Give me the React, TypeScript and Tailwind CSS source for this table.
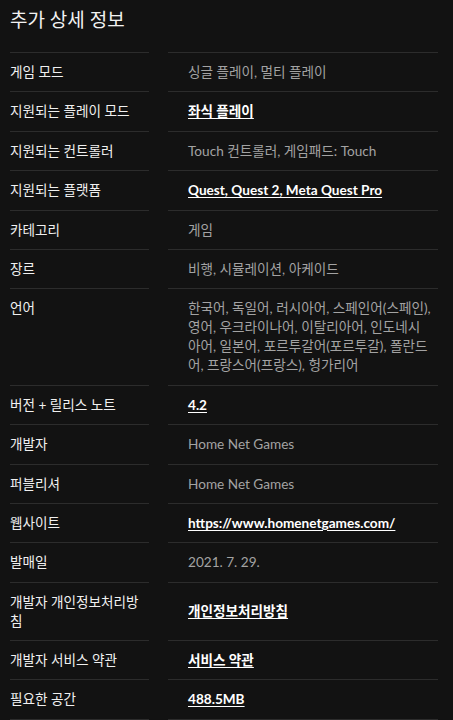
const rows: { label: string; value: string; link?: boolean }[] = [
  { label: "게임 모드", value: "싱글 플레이, 멀티 플레이" },
  { label: "지원되는 플레이 모드", value: "좌식 플레이", link: true },
  { label: "지원되는 컨트롤러", value: "Touch 컨트롤러, 게임패드: Touch" },
  { label: "지원되는 플랫폼", value: "Quest, Quest 2, Meta Quest Pro", link: true },
  { label: "카테고리", value: "게임" },
  { label: "장르", value: "비행, 시뮬레이션, 아케이드" },
  {
    label: "언어",
    value:
      "한국어, 독일어, 러시아어, 스페인어(스페인), 영어, 우크라이나어, 이탈리아어, 인도네시아어, 일본어, 포르투갈어(포르투갈), 폴란드어, 프랑스어(프랑스), 헝가리어",
  },
  { label: "버전 + 릴리스 노트", value: "4.2", link: true },
  { label: "개발자", value: "Home Net Games" },
  { label: "퍼블리셔", value: "Home Net Games" },
  { label: "웹사이트", value: "https://www.homenetgames.com/", link: true },
  { label: "발매일", value: "2021. 7. 29." },
  { label: "개발자 개인정보처리방침", value: "개인정보처리방침", link: true },
  { label: "개발자 서비스 약관", value: "서비스 약관", link: true },
  { label: "필요한 공간", value: "488.5MB", link: true },
];

const App = () => {
  return (
    <div
      className="min-h-screen bg-[#121212] pl-[10px] pb-4"
      style={{ fontFamily: 'Lato, "Noto Sans CJK KR", sans-serif' }}
    >
      <h2 className="pt-[8px] pb-[20px] text-[19px] leading-[24px] text-[#f2f2f2]">
        추가 상세 정보
      </h2>
      <div className="flex flex-col">
        {rows.map((row, i) => {
          const last = i === rows.length - 1;
          return (
            <div key={row.label} className="flex gap-x-[19px] text-[13.6px] leading-[19px]">
              <div
                className={`w-[139px] shrink-0 border-t border-[#2c2c2c] pt-[10px] pb-[9.4px] text-[#f0f0f0] ${
                  last ? "border-b" : ""
                }`}
              >
                {row.label}
              </div>
              <div
                className={`flex w-[270px] items-center border-t border-[#2c2c2c] pl-[20px] pr-[6px] pt-[10px] pb-[9.4px] ${
                  last ? "border-b" : ""
                }`}
              >
                {row.link ? (
                  <span className="font-bold text-white underline underline-offset-2">{row.value}</span>
                ) : (
                  <span className="text-[#a3a3a3]">{row.value}</span>
                )}
              </div>
            </div>
          );
        })}
      </div>
    </div>
  );
};

export default App;
